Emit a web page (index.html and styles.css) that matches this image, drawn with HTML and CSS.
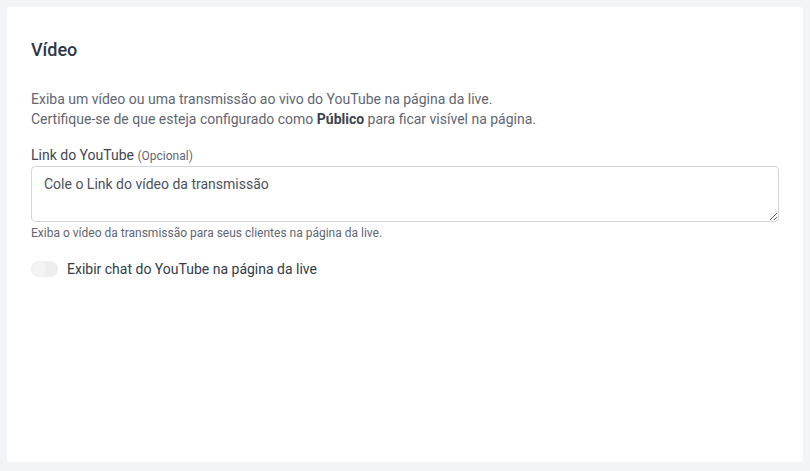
FILE: index.html
```html
<!DOCTYPE html>
<html lang="pt-BR">
<head>
    <meta charset="UTF-8">
    <meta name="viewport" content="width=device-width, initial-scale=1.0">
    <title>Vídeo</title>
    <link rel="stylesheet" href="styles.css">
</head>
<body>

    <div class="card">
        <h2 class="card-title">Vídeo</h2>

        <p class="intro">
            Exiba um vídeo ou uma transmissão ao vivo do YouTube na página da live.<br>
            Certifique-se de que esteja configurado como <strong>Público</strong> para ficar visível na página.
        </p>

        <div class="field">
            <label for="youtubeLink">Link do YouTube <small>(Opcional)</small></label>
            <textarea id="youtubeLink" placeholder="Cole o Link do vídeo da transmissão"></textarea>
            <p class="hint">Exiba o vídeo da transmissão para seus clientes na página da live.</p>
        </div>

        <label class="switch-row">
            <input type="checkbox" class="switch-input">
            <span class="switch"></span>
            <span class="switch-label">Exibir chat do YouTube na página da live</span>
        </label>
    </div>

</body>
</html>
```

FILE: styles.css
```css
/* Page */
body {
    font-family: Roboto, "Liberation Sans", Arial, sans-serif;
    background: #f3f4f6;
    margin: 0;
    padding: 7px;
    color: #4b5563;
}

/* Card */
.card {
    background: #fff;
    border-radius: 4px;
    height: 455px;
    width: 796px;
    box-sizing: border-box;
    padding: 31px 24px 0 24px;
}

.card-title {
    margin: 0 0 27px;
    font-size: 18px;
    font-weight: 500;
    line-height: 24px;
    color: #2d3748;
}

.intro {
    margin: 0 0 17px;
    font-size: 14px;
    line-height: 20px;
    color: #5f6673;
}

.intro strong {
    color: #3d4451;
    font-weight: 700;
}

/* Field */
.field label {
    display: block;
    font-size: 14px;
    line-height: 19px;
    color: #3f4652;
    margin-bottom: 0;
}

.field small {
    font-size: 12px;
    color: #5f6673;
}

textarea {
    display: block;
    width: 748px;
    height: 56px;
    box-sizing: border-box;
    border: 1px solid #d3d6dc;
    border-radius: 4px;
    padding: 7px 12px;
    font-family: inherit;
    font-size: 14px;
    line-height: 20px;
    color: #333;
    resize: vertical;
    margin: 0;
}

textarea::placeholder {
    color: #4b5160;
}

.hint {
    margin: 3px 0 0;
    font-size: 12px;
    line-height: 16px;
    color: #5f6673;
}

/* Toggle */
.switch-row {
    display: flex;
    align-items: center;
    gap: 9px;
    margin-top: 18px;
    cursor: pointer;
}

.switch-input {
    display: none;
}

.switch {
    position: relative;
    width: 27px;
    height: 16px;
    border-radius: 8px;
    background: #eeeeef;
}

.switch::after {
    content: "";
    position: absolute;
    left: 1px;
    top: 1px;
    width: 14px;
    height: 14px;
    border-radius: 50%;
    background: #f4f4f5;
}

.switch-label {
    font-size: 14px;
    line-height: 20px;
    color: #333b48;
}
```
